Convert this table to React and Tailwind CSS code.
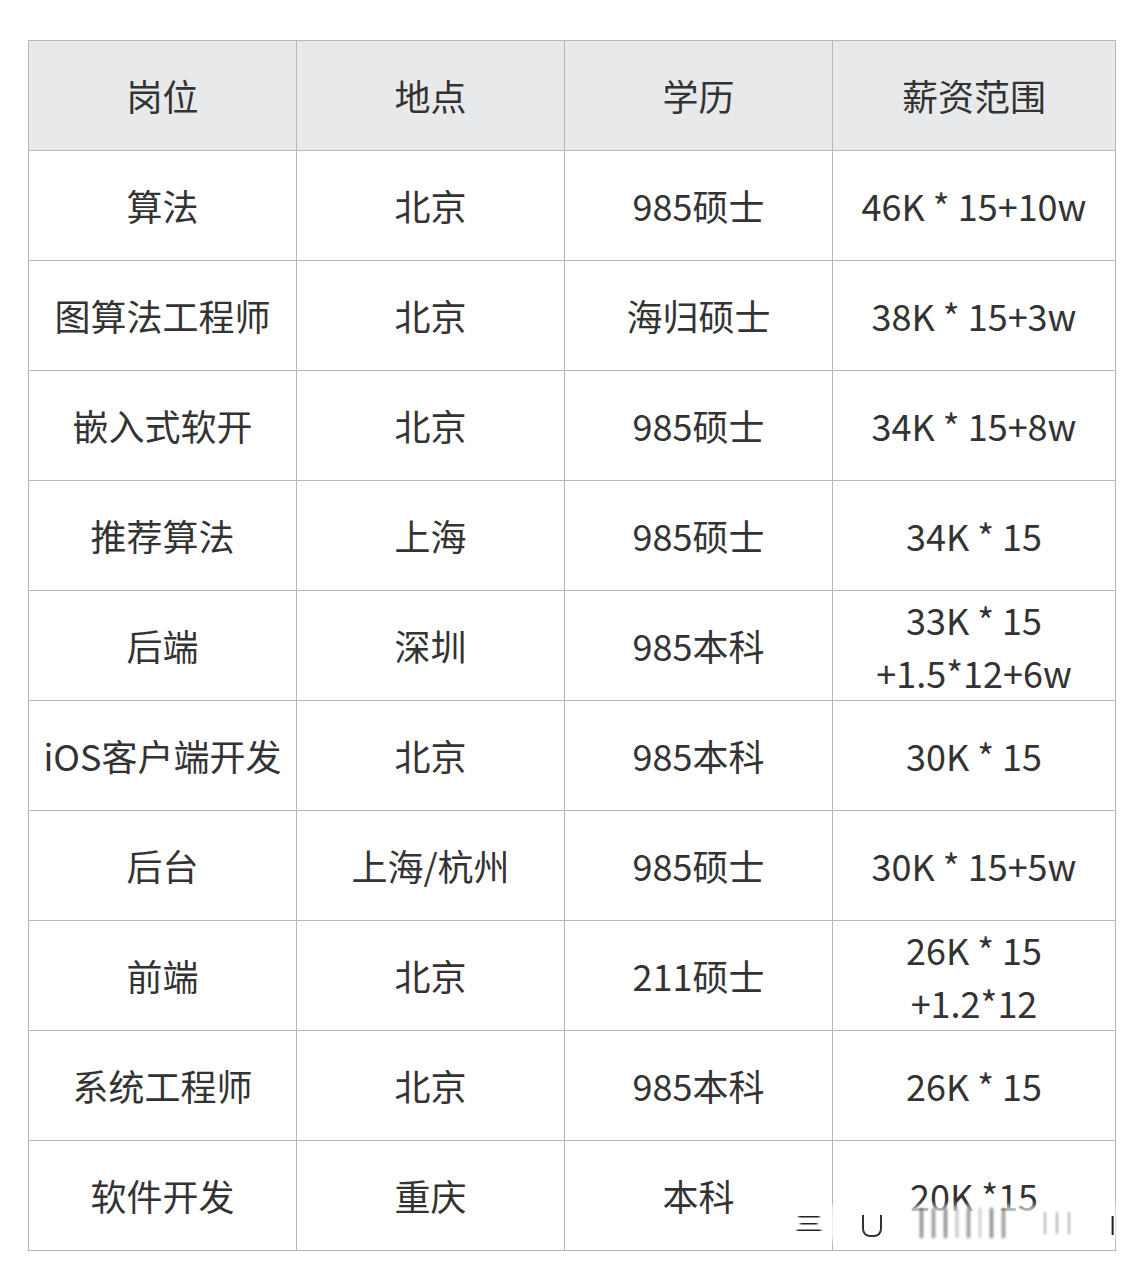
import React from "react";

const rows = [
  ["算法", "北京", "985硕士", ["46K * 15+10w"]],
  ["图算法工程师", "北京", "海归硕士", ["38K * 15+3w"]],
  ["嵌入式软开", "北京", "985硕士", ["34K * 15+8w"]],
  ["推荐算法", "上海", "985硕士", ["34K * 15"]],
  ["后端", "深圳", "985本科", ["33K * 15", "+1.5*12+6w"]],
  ["iOS客户端开发", "北京", "985本科", ["30K * 15"]],
  ["后台", "上海/杭州", "985硕士", ["30K * 15+5w"]],
  ["前端", "北京", "211硕士", ["26K * 15", "+1.2*12"]],
  ["系统工程师", "北京", "985本科", ["26K * 15"]],
  ["软件开发", "重庆", "本科", ["20K *15"]],
];

const cell =
  "h-[110px] border-r border-b border-[#b8b8b8] flex flex-col items-center justify-center text-center leading-[53px]";

export default function App() {
  return (
    <div
      className="w-[1145px] h-[1264px] bg-white text-[#333333] text-[36px] font-normal relative"
      style={{ fontFamily: '"Noto Sans CJK SC", "Noto Sans", sans-serif' }}
    >
      <div className="pt-[40px] pl-[28px]">
        <div className="grid grid-cols-[268px_268px_268px_283px] border-l border-t border-[#b8b8b8] w-[1088px]">
          {["岗位", "地点", "学历", "薪资范围"].map((h) => (
            <div key={h} className={cell + " bg-[#e8e9ea]"}>
              {h}
            </div>
          ))}
          {rows.map((r, i) => (
            <React.Fragment key={i}>
              <div className={cell}>{r[0]}</div>
              <div className={cell}>{r[1]}</div>
              <div className={cell}>{r[2]}</div>
              <div className={cell}>
                {r[3].map((l) => (
                  <span key={l} className="block">
                    {l}
                  </span>
                ))}
              </div>
            </React.Fragment>
          ))}
        </div>
      </div>
      <div className="absolute left-[795px] top-[1206px] w-[322px] h-[34px] flex items-center justify-between pointer-events-none">
        <div className="absolute inset-0 bg-white/75 blur-[3px]" />
        <span className="relative text-[28px] text-[#222] blur-[1px] scale-y-[0.7]">三</span>
        <span className="relative w-[20px] h-[22px] border-b-2 border-l-2 border-r-2 border-[#333] rounded-b-[8px] blur-[0.5px] mt-[6px]" />
        <span className="relative flex gap-[9px] h-[30px] items-stretch blur-[1.5px] opacity-70">
          <span className="w-[3px] bg-[#444]" />
          <span className="w-[3px] bg-[#555]" />
          <span className="w-[3px] bg-[#444]" />
          <span className="w-[2px] bg-[#888]" />
          <span className="w-[3px] bg-[#555]" />
          <span className="w-[2px] bg-[#999]" />
          <span className="w-[3px] bg-[#444]" />
          <span className="w-[3px] bg-[#555]" />
        </span>
        <span className="relative flex gap-[10px] h-[22px] items-stretch blur-[1px] opacity-50">
          <span className="w-[2px] bg-[#666]" />
          <span className="w-[2px] bg-[#666]" />
          <span className="w-[2px] bg-[#666]" />
        </span>
        <span className="relative text-[26px] text-[#222] blur-[0.5px]">ǀ</span>
      </div>
    </div>
  );
}
